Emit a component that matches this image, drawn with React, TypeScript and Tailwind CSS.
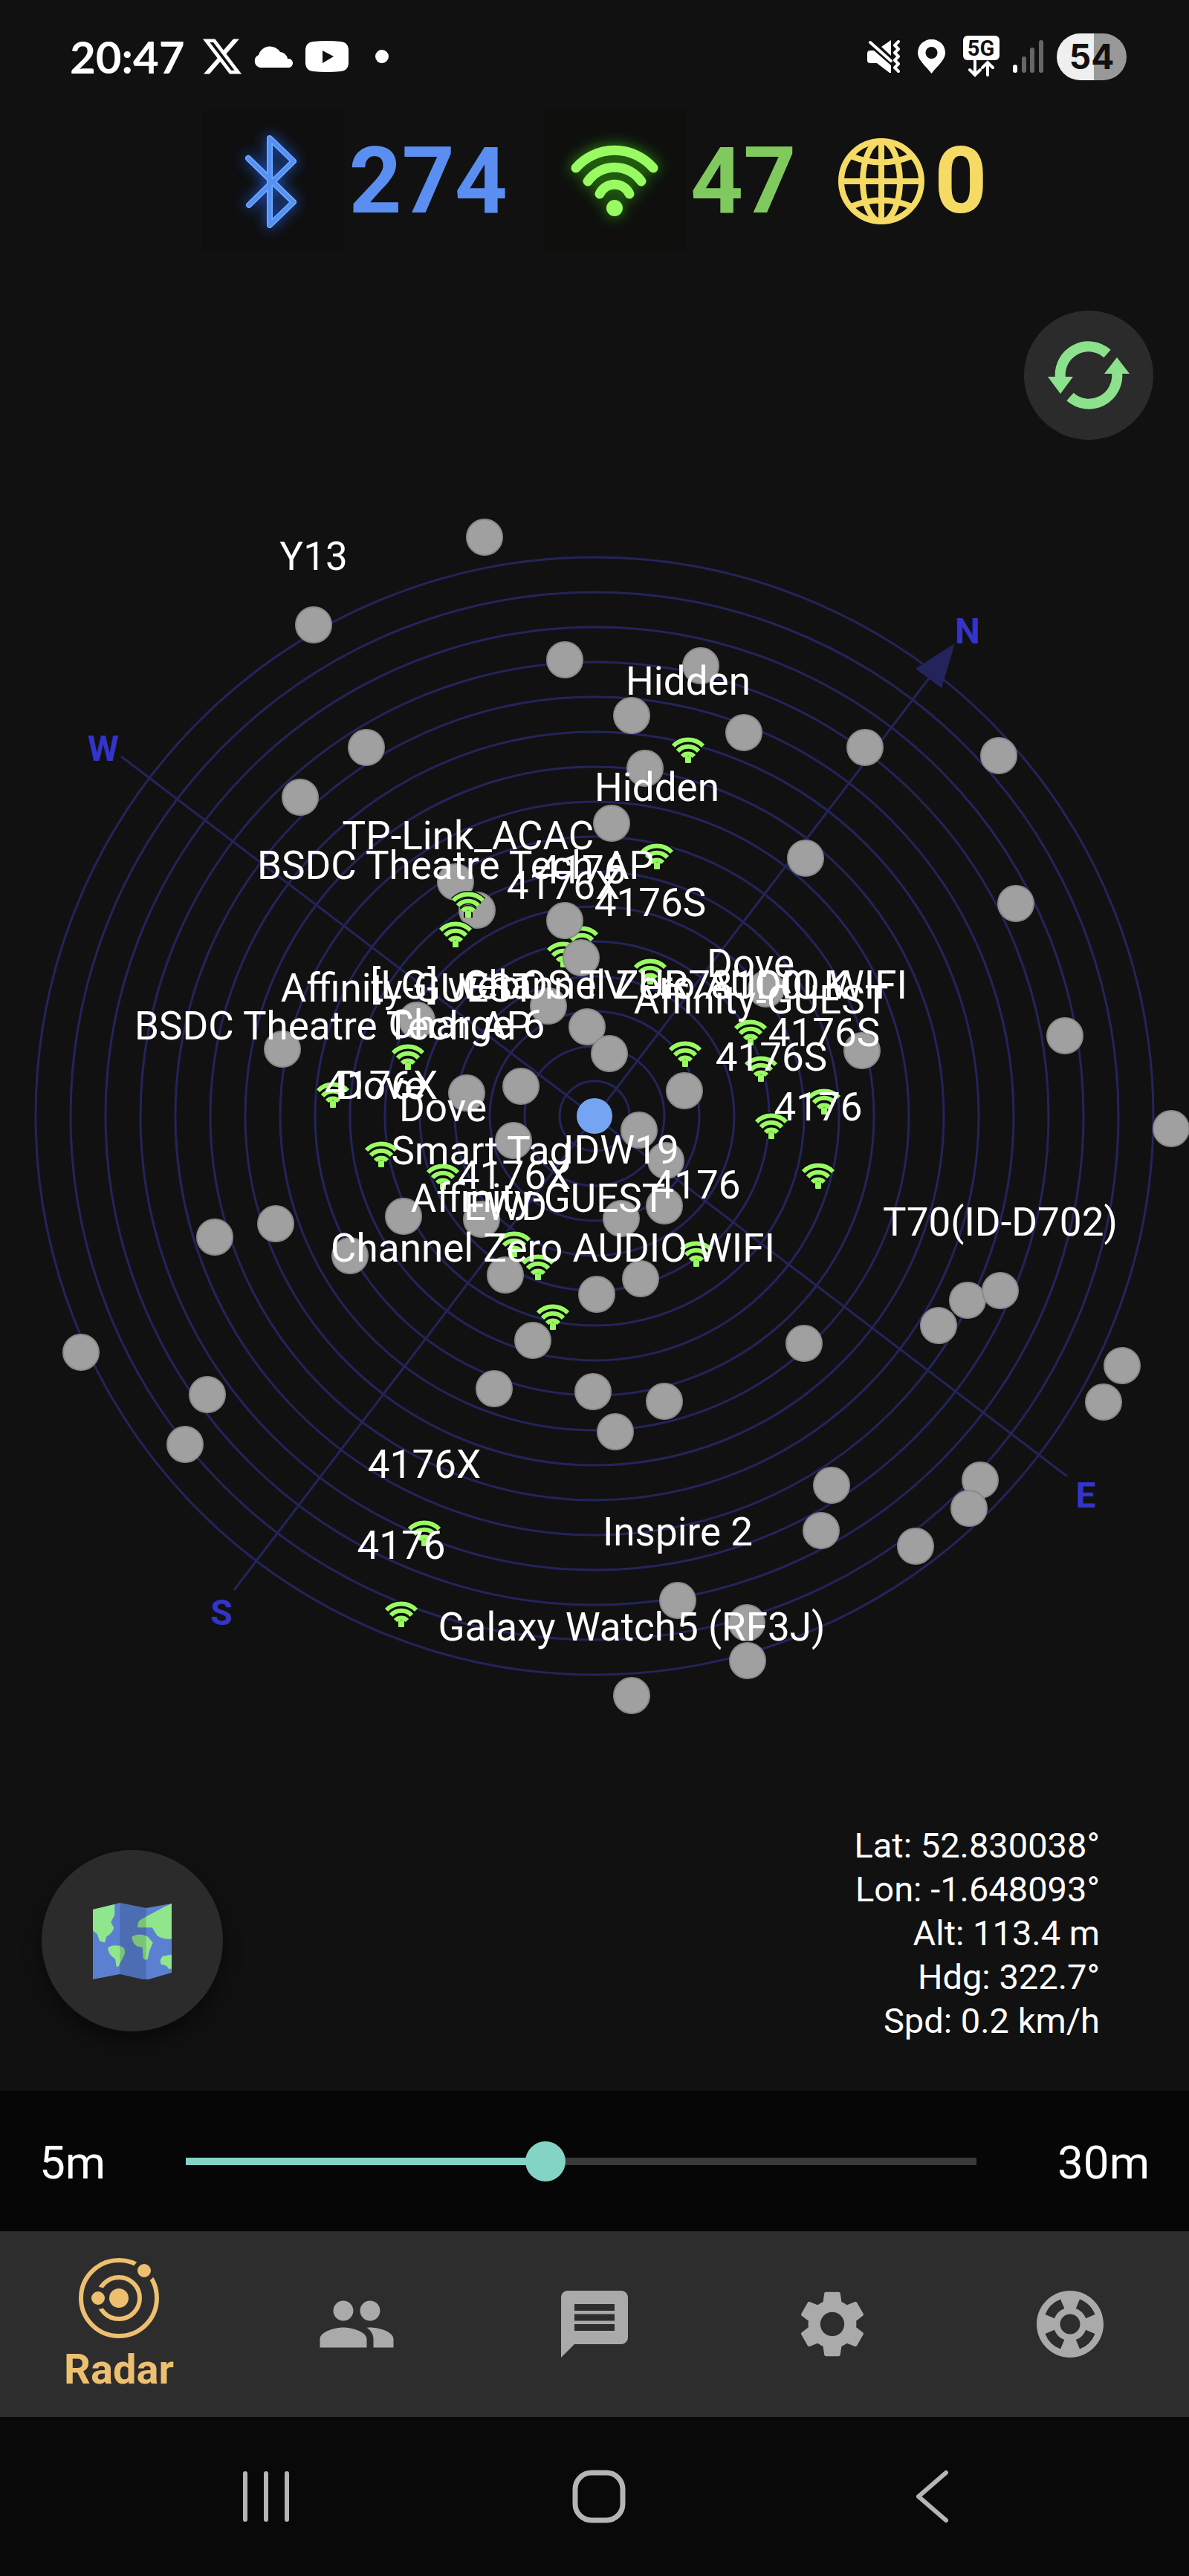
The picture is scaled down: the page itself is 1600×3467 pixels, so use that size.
import { useState } from 'react'
import type { ReactNode } from 'react'
import { MdMessage, MdPeople, MdSettings, MdSupport } from 'react-icons/md'

type Device = { x: number; y: number; names?: string[] }

const CENTER = { x: 800, y: 1502 }
const RING_GAP = 47
const RINGS = Array.from({ length: 16 }, (_, i) => (i + 1) * RING_GAP)
// Names are written this far above their device
const LABEL_OFFSET = 74

const bluetoothDevices: Device[] = [
  { x: 652, y: 723 },
  { x: 422, y: 841, names: ['Y13'] },
  { x: 760, y: 888 },
  { x: 493, y: 1006 },
  { x: 404, y: 1073 },
  { x: 943, y: 896 },
  { x: 850, y: 963 },
  { x: 1001, y: 986 },
  { x: 868, y: 1034 },
  { x: 1164, y: 1006 },
  { x: 1344, y: 1017 },
  { x: 823, y: 1108 },
  { x: 1084, y: 1155 },
  { x: 1367, y: 1216 },
  { x: 613, y: 1187 },
  { x: 642, y: 1225 },
  { x: 760, y: 1239 },
  { x: 782, y: 1289 },
  { x: 738, y: 1354 },
  { x: 561, y: 1373 },
  { x: 380, y: 1412 },
  { x: 790, y: 1382 },
  { x: 701, y: 1462 },
  { x: 628, y: 1471, names: ['Charge 6'] },
  { x: 691, y: 1535 },
  { x: 1031, y: 1331 },
  { x: 820, y: 1418, names: ['[LG] webOS TV UR781C0LK'] },
  { x: 1160, y: 1414 },
  { x: 921, y: 1468 },
  { x: 860, y: 1521 },
  { x: 896, y: 1562 },
  { x: 894, y: 1623 },
  { x: 836, y: 1640, names: ['IDW19'] },
  { x: 648, y: 1641, names: ['Smart Tag'] },
  { x: 543, y: 1637 },
  { x: 471, y: 1690 },
  { x: 680, y: 1716, names: ['EWD'] },
  { x: 803, y: 1742 },
  { x: 862, y: 1721 },
  { x: 717, y: 1804 },
  { x: 665, y: 1869 },
  { x: 798, y: 1873 },
  { x: 894, y: 1886 },
  { x: 828, y: 1927 },
  { x: 1082, y: 1808 },
  { x: 109, y: 1820 },
  { x: 279, y: 1877 },
  { x: 249, y: 1944 },
  { x: 289, y: 1665 },
  { x: 371, y: 1647 },
  { x: 1433, y: 1394 },
  { x: 1576, y: 1519 },
  { x: 1263, y: 1784 },
  { x: 1302, y: 1750 },
  { x: 1346, y: 1737, names: ['T70(ID-D702)'] },
  { x: 1510, y: 1838 },
  { x: 1485, y: 1887 },
  { x: 1319, y: 1992 },
  { x: 1304, y: 2030 },
  { x: 1119, y: 1999 },
  { x: 1105, y: 2060 },
  { x: 1232, y: 2081 },
  { x: 912, y: 2154, names: ['Inspire 2'] },
  { x: 1005, y: 2184 },
  { x: 1006, y: 2235 },
  { x: 850, y: 2282, names: ['Galaxy Watch5 (RF3J)'] },
]

// Drawn below the bluetooth dots
const wifiBelow: Device[] = [
  { x: 758, y: 1284, names: ['4176X'] },
  { x: 783, y: 1263, names: ['4176'] },
]

const wifiDevices: Device[] = [
  { x: 926, y: 1009, names: ['Hidden'] },
  { x: 884, y: 1152, names: ['Hidden'] },
  { x: 630, y: 1217, names: ['TP-Link_ACAC'] },
  { x: 613, y: 1257, names: ['BSDC Theatre Tech AP'] },
  { x: 549, y: 1422, names: ['Affinity-GUEST'] },
  { x: 448, y: 1473, names: ['BSDC Theatre Tech AP'] },
  { x: 513, y: 1553, names: ['4176X', 'Dove'] },
  { x: 596, y: 1583, names: ['Dove'] },
  { x: 875, y: 1307, names: ['4176S'] },
  { x: 1010, y: 1389, names: ['Dove'] },
  { x: 922, y: 1418, names: ['Channel Zero AUDIO WIFI'] },
  { x: 1024, y: 1438, names: ['Affinity-GUEST'] },
  { x: 1109, y: 1482, names: ['4176S'] },
  { x: 1038, y: 1515, names: ['4176S'] },
  { x: 1101, y: 1582, names: ['4176'] },
  { x: 692, y: 1674, names: ['4176X'] },
  { x: 724, y: 1705, names: ['Affinity-GUEST'] },
  { x: 744, y: 1772, names: ['Channel Zero AUDIO WIFI'] },
  { x: 937, y: 1687, names: ['4176'] },
  { x: 571, y: 2063, names: ['4176X'] },
  { x: 540, y: 2172, names: ['4176'] },
]

const compass = [
  { letter: 'N', x: 1302, y: 866 },
  { letter: 'W', x: 139, y: 1024 },
  { letter: 'S', x: 298, y: 2187 },
  { letter: 'E', x: 1461, y: 2029 },
]

const telemetry = [
  'Lat: 52.830038°',
  'Lon: -1.648093°',
  'Alt: 113.4 m',
  'Hdg: 322.7°',
  'Spd: 0.2 km/h',
]

function WifiMarker({ x, y }: Device) {
  const arcs = 'M-20 -5 A28 28 0 0 1 20 -5 M-14 2 A19 19 0 0 1 14 2 M-8 9 A11 11 0 0 1 8 9'
  return (
    <g transform={`translate(${x} ${y})`} fill="none">
      <path d={arcs} stroke="#0b0b0b" strokeWidth="9" />
      <rect x="-6" y="8" width="12" height="10" fill="#0b0b0b" />
      <path d={arcs} stroke="#98fb62" strokeWidth="6" />
      <rect x="-4" y="9" width="8" height="9" rx="1" fill="#98fb62" />
    </g>
  )
}

function Radar() {
  const named = [...wifiBelow, ...bluetoothDevices, ...wifiDevices]
  return (
    <svg viewBox="0 592 1600 1838" className="block w-full" role="img" aria-label="Radar">
      <g fill="none" stroke="#24245c" strokeWidth="3">
        {RINGS.map((r) => (
          <circle key={r} cx={CENTER.x} cy={CENTER.y} r={r} />
        ))}
        <path d="M315 2140 L1250 913 M163 1018 L1436 1987" />
      </g>
      <path d="M1285 866 L1232 900 L1267 926 Z" fill="#24245c" />
      <g fill="#3434c8" fontSize="48" fontWeight="700" textAnchor="middle">
        {compass.map((c) => (
          <text key={c.letter} x={c.x} y={c.y}>{c.letter}</text>
        ))}
      </g>
      {wifiBelow.map((d) => <WifiMarker key={`${d.x}-${d.y}`} {...d} />)}
      <g fill="#a0a0a0" stroke="#8a8a8a" strokeWidth="2">
        {bluetoothDevices.map((d) => (
          <circle key={`${d.x}-${d.y}`} cx={d.x} cy={d.y} r="24" />
        ))}
      </g>
      {wifiDevices.map((d) => <WifiMarker key={`${d.x}-${d.y}`} {...d} />)}
      <circle cx={CENTER.x} cy={CENTER.y} r="24" fill="#74a4f2" />
      <g fill="#fff" fontSize="53" textAnchor="middle">
        {named.map((d) =>
          d.names?.map((name) => (
            <text key={`${name}-${d.x}-${d.y}`} x={d.x} y={d.y - LABEL_OFFSET}>{name}</text>
          ))
        )}
      </g>
    </svg>
  )
}

function StatusBar() {
  return (
    <div className="flex h-[148px] items-center justify-between pl-[94px] pr-[84px] pt-1 text-white">
      <div className="flex items-center">
        <span className="font-['Lato',sans-serif] text-[60px] font-bold leading-none">20:47</span>
        <svg className="ml-6 w-[52px]" viewBox="0 0 24 24" fill="currentColor">
          <path d="M18.9 1.15h3.68l-8.04 9.19L24 22.85h-7.41l-5.8-7.58-6.64 7.58H.47l8.6-9.83L0 1.15h7.59l5.24 6.93ZM17.61 20.64h2.04L6.49 3.24H4.3Z" />
        </svg>
        <svg className="ml-4 w-[54px]" viewBox="0 0 54 30" fill="currentColor">
          <path d="M9 30 A9 9 0 0 1 7 13 A16 16 0 0 1 36 9 A11 11 0 0 1 46 18 A6 6 0 0 1 48 30 Z" />
        </svg>
        <svg className="ml-4 w-[58px]" viewBox="0 0 58 42" fill="currentColor" fillRule="evenodd">
          <path d="M10 1 Q29 -1 48 1 Q57 2 58 11 Q59 21 58 31 Q57 40 48 41 Q29 43 10 41 Q1 40 0 31 Q-1 21 0 11 Q1 2 10 1 Z M23 13 V30 L38 21 Z" />
        </svg>
        <span className="ml-9 size-[18px] rounded-full bg-white" />
      </div>

      <div className="flex items-center gap-[18px]">
        <svg className="mr-1.5 w-11" viewBox="0 0 44 44" fill="none" stroke="currentColor">
          <path d="M0 18 Q0 14 4 14 H9 L32 34 V44 H30 L13 31 H4 Q0 31 0 27 Z M19 9 L32 0 V21 Z" fill="currentColor" stroke="none" />
          <path d="M4 3 L32 28" strokeWidth="4" strokeLinecap="round" />
          <path d="M42 2 L37 7 L42 12 L37 17 L42 22 L37 27 L42 32 L37 37 L42 42" strokeWidth="4" strokeLinejoin="round" strokeLinecap="round" />
        </svg>
        <svg className="mr-1.5 w-[37px]" viewBox="0 0 37 46" fill="currentColor" fillRule="evenodd">
          <path d="M18.500 0 A18 18 0 0 1 37 18 C37 28 26 36 18.500 46 C11 36 0 28 0 18 A18 18 0 0 1 18.500 0 Z M18.500 10 A8 8 0 1 0 18.500 26 A8 8 0 1 0 18.500 10 Z" />
        </svg>
        <svg className="w-[49px]" viewBox="0 0 49 56">
          <rect width="49" height="33" rx="6" fill="#fff" />
          <text x="24" y="27" fontSize="29" fontWeight="700" textAnchor="middle" fill="#111">5G</text>
          <path d="M16 34 V52 M9 46 L16 53 L23 46 M33 53 V37 M26 43 L33 36 L40 43" fill="none" stroke="#fff" strokeWidth="4" strokeLinecap="round" />
        </svg>
        <svg className="w-[41px]" viewBox="0 0 41 44">
          <rect y="33" width="6" height="11" rx="3" fill="#fff" />
          <rect x="12" y="22" width="6" height="22" rx="3" fill="#666" />
          <rect x="23" y="10" width="6" height="34" rx="3" fill="#666" />
          <rect x="35" width="6" height="44" rx="3" fill="#666" />
        </svg>
        <span className="flex h-[63px] w-[94px] items-center justify-center rounded-full bg-linear-to-r from-[#efefef] from-53% to-[#999] to-53% font-['Inter',sans-serif] text-[46px] font-bold leading-none text-[#111]">
          54
        </span>
      </div>
    </div>
  )
}

function Counters() {
  return (
    <div className="flex items-center justify-center gap-12 text-[124px] font-bold leading-none">
      <div className="flex items-center gap-1.5 text-[#5a8ef0]">
        <svg className="size-48 bg-[#0f0f10]" viewBox="-94 -96 192 192" fill="none" strokeLinejoin="round" strokeLinecap="round">
          <g className="drop-shadow-[0_0_9px_#1f5fe0]">
            <path d="M-32 -31 L29 28 L-3 59 V-58 L29 -27 L-31 32" stroke="#73aeff" strokeWidth="8" />
            <path d="M-32 -31 L29 28 L-3 59 V-58 L29 -27 L-31 32" stroke="#5590f2" strokeWidth="5" />
          </g>
        </svg>
        <span>274</span>
      </div>
      <div className="flex items-center gap-1.5 text-[#80c95f]">
        <svg className="size-48 bg-[#0f100e]" viewBox="-96 -96 192 192" fill="none" strokeLinecap="round">
          <g className="drop-shadow-[0_0_9px_#2f9a10]" stroke="#98fb62" strokeWidth="13">
            <path d="M-52 -18 A69 69 0 0 1 52 -18" />
            <path d="M-36 0 A44 44 0 0 1 36 0" />
            <path d="M-20 17 A22 22 0 0 1 20 17" />
            <circle cy="36" r="11" fill="#98fb62" stroke="none" />
          </g>
        </svg>
        <span>47</span>
      </div>
      <div className="flex items-center gap-3 pl-2 text-[#f5da64]">
        <svg className="size-[118px]" viewBox="-59 -59 118 118" fill="none" stroke="currentColor" strokeWidth="8">
          <circle r="54" />
          <ellipse rx="25" ry="54" />
          <path d="M0 -54 V54 M-54 0 H54 M-41 -34 Q0 -17 41 -34 M-41 34 Q0 17 41 34" />
        </svg>
        <span>0</span>
      </div>
    </div>
  )
}

function RefreshIcon() {
  return (
    <svg className="size-[120px]" viewBox="-60 -60 120 120" fill="none" stroke="#8ce28c" strokeWidth="14">
      <path d="M25 -29 A38 38 0 0 0 -38 4 M-25 29 A38 38 0 0 0 38 -4" />
      <path d="M-55 2 H-21 L-38 25 Z M55 -2 H21 L38 -24 Z" fill="#8ce28c" stroke="none" />
    </svg>
  )
}

function MapIcon() {
  return (
    <svg className="w-[106px]" viewBox="0 0 105 104">
      <path d="M0 10 L36 1 L71 8 L105 2 V94 L71 104 L36 96 L0 103 Z" fill="#5b80d2" />
      <g fill="#90e68c">
        <path d="M0 10 L29 3 V17 L24 27 L28 34 Q26 42 18 46 L16 54 L9 52 L6 43 L0 38 Z" />
        <path d="M20 61 Q28 55 40 60 Q44 64 42 70 L35 84 Q32 89 31 84 L30 76 Q20 70 20 61 Z" />
        <path d="M52 46 Q62 40 73 46 L80 54 L75 66 L73 76 Q69 79 67 74 L66 60 Q53 60 52 46 Z" />
        <path d="M105 2 L94 7 L66 22 Q58 26 60 34 H79 L86 45 Q94 50 105 49 Z" />
        <path d="M105 70 L93 72 Q88 78 91 83 L98 85 L101 89 H105 Z" />
      </g>
      <path d="M36 1 L71 8 V104 L36 96 Z" fill="#000" opacity="0.15" />
    </svg>
  )
}

function RangeSlider() {
  const [range, setRange] = useState(16.3)
  const percent = ((range - 5) / 25) * 100
  return (
    <div className="flex h-[189px] items-center justify-between bg-[#060606] px-[53px] text-[62px]">
      <label htmlFor="range" className="w-[197px] pt-1">5m</label>
      <input
        id="range"
        type="range"
        min={5}
        max={30}
        step={0.1}
        value={range}
        onChange={(e) => setRange(Number(e.target.value))}
        style={{ backgroundImage: `linear-gradient(to right, #83d4c4 ${percent}%, #3a3a3a ${percent}%)` }}
        className="h-2.5 flex-1 appearance-none [&::-webkit-slider-thumb]:size-[54px] [&::-webkit-slider-thumb]:appearance-none [&::-webkit-slider-thumb]:rounded-full [&::-webkit-slider-thumb]:bg-[#83d4c4]"
      />
      <span className="w-[233px] pt-1 text-right">30m</span>
    </div>
  )
}

function RadarTabIcon() {
  return (
    <svg className="size-[108px]" viewBox="-54 -54 108 108" fill="none" stroke="currentColor">
      <circle r="51" strokeWidth="6" />
      <circle r="28" strokeWidth="6" />
      <g fill="currentColor" stroke="#2d2d2d" strokeWidth="6">
        <circle cx="34" cy="-37" r="12" />
        <circle cx="-28" r="12" />
      </g>
      <circle r="13" fill="currentColor" stroke="none" />
    </svg>
  )
}

function Tab({ label, children }: { label: string; children: ReactNode }) {
  return (
    <button aria-label={label} className="flex items-center justify-center text-[108px] text-[#aaa]">
      {children}
    </button>
  )
}

export default function App() {
  return (
    <div className="flex flex-col bg-[#111] font-['Roboto',sans-serif] text-white">
      <StatusBar />
      <Counters />

      <main>
        <div className="flex justify-end pr-12 pt-[78px]">
          <button aria-label="Refresh" className="flex size-[174px] items-center justify-center rounded-full bg-[#2b2b2b]">
            <RefreshIcon />
          </button>
        </div>
        <Radar />
        <div className="flex h-96 items-start justify-between pl-14 pr-[120px] pt-6">
          <button aria-label="Map" className="mt-9 flex size-[244px] items-center justify-center rounded-full bg-[#2b2b2b] shadow-[0_14px_24px_#0a0a0a]">
            <MapIcon />
          </button>
          <div className="text-right text-[47px] leading-[59px]">
            {telemetry.map((line) => (
              <p key={line}>{line}</p>
            ))}
          </div>
        </div>
      </main>

      <RangeSlider />

      <nav className="grid h-[250px] grid-cols-5 bg-[#2d2d2d]">
        <button className="flex flex-col items-center gap-2.5 pt-[36px] text-[56px] font-bold leading-[64px] text-[#edbf70]">
          <RadarTabIcon />
          Radar
        </button>
        <Tab label="People"><MdPeople /></Tab>
        <Tab label="Messages"><MdMessage /></Tab>
        <Tab label="Settings"><MdSettings /></Tab>
        <Tab label="Support"><MdSupport /></Tab>
      </nav>

      {/* Android system navigation */}
      <div className="grid h-[214px] grid-cols-3 items-center justify-items-center bg-[#090909] pl-[134px] pr-[122px]">
        <button aria-label="Recent apps">
          <svg className="size-[72px]" viewBox="0 0 72 72" stroke="#b5b5b5" strokeWidth="6" strokeLinecap="round">
            <path d="M8 5 V67 M36 5 V67 M64 5 V67" />
          </svg>
        </button>
        <button aria-label="Home">
          <svg className="size-[72px]" viewBox="0 0 72 72" fill="none" stroke="#b5b5b5" strokeWidth="7">
            <rect x="4" y="4" width="64" height="64" rx="22" />
          </svg>
        </button>
        <button aria-label="Back">
          <svg className="size-[72px]" viewBox="0 0 72 72" fill="none" stroke="#b5b5b5" strokeWidth="6" strokeLinecap="round" strokeLinejoin="round">
            <path d="M55 4 L18 36 L55 68" />
          </svg>
        </button>
      </div>
    </div>
  )
}
